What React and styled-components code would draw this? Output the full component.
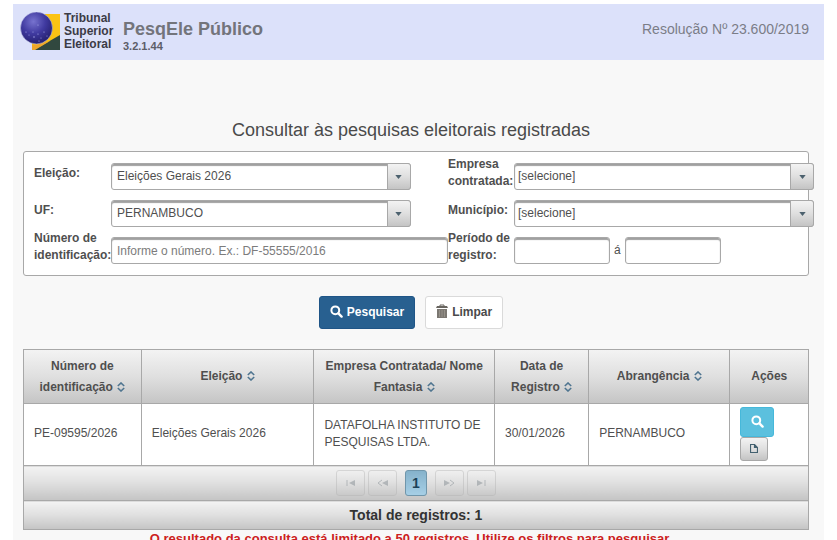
import React from 'react';
import styled, { createGlobalStyle, css } from 'styled-components';

const GlobalStyle = createGlobalStyle`
  * {
    box-sizing: border-box;
  }

  body {
    margin: 0;
    background: #ffffff;
    color: #4f4f4f;
    font-family: 'Liberation Sans', Arial, sans-serif;
    font-size: 12px;
    line-height: 17px;
  }

  button,
  input,
  select {
    font: inherit;
    color: inherit;
  }
`;

const metal = css`
  background: linear-gradient(to bottom, #f3f3f3 0%, #dfdfdf 50%, #c4c4c4 100%);
`;

const Page = styled.div`
  margin: 4px 13px 0;
  background: #f8f8f8;
`;

const Header = styled.header`
  display: flex;
  align-items: center;
  height: 56px;
  padding: 0 15px 0 7px;
  background: #dce1fa;
`;

const Logo = styled.div`
  display: flex;
  align-items: center;
  gap: 4px;
  padding-bottom: 2px;
  color: #3b3b46;
  font-weight: bold;
  line-height: 13px;
`;

const LogoText = styled.span`
  width: 49px;
`;

const Brand = styled.div`
  flex: 1;
  margin-left: 10px;
  padding-top: 9px;
  color: #73747b;
  font-weight: bold;
`;

const BrandName = styled.h1`
  margin: 0;
  font-size: 18px;
  line-height: 20px;
`;

const Version = styled.small`
  display: block;
  color: #5c5d68;
  font-size: 11px;
  line-height: 15px;
`;

const Resolution = styled.span`
  padding-bottom: 6px;
  color: #7b7d87;
  font-size: 14px;
`;

const Main = styled.main`
  padding: 58px 15px 20px 10px;
`;

const Title = styled.h2`
  margin: 0 0 9px;
  padding-right: 10px;
  color: #4a4a4a;
  font-size: 18px;
  font-weight: normal;
  line-height: 24px;
  text-align: center;
`;

const Panel = styled.form`
  margin: 0;
`;

const Fields = styled.div`
  display: grid;
  grid-template-columns: 77px 337fr 66px 294fr;
  grid-auto-rows: 34px;
  row-gap: 3px;
  padding: 4px 0 11px 10px;
  border: 1px solid #a8a8a8;
  border-radius: 3px;
  background: #ffffff;

  > :nth-child(4n) {
    margin-right: -6px;
  }
`;

const Label = styled.label`
  align-self: center;
  font-weight: bold;
`;

const Field = styled.div`
  display: flex;
  align-items: center;
  align-self: end;
  gap: 4px;
`;

const control = css`
  height: 27px;
  padding: 0 5px;
  border: 1px solid #a8a8a8;
  border-radius: 3px;
  background: #ffffff;
  box-shadow: inset 0 2px 1px #a0a0a0;
  outline: none;
`;

const TextInput = styled.input`
  ${control}
  width: ${({ $short }) => ($short ? '96px' : '100%')};

  &::placeholder {
    color: #7c7c7c;
    opacity: 1;
  }
`;

const SelectBox = styled.div`
  position: relative;
  width: ${({ $wide }) => ($wide ? '100%' : '89%')};
`;

const Select = styled.select`
  ${control}
  display: block;
  width: 100%;
  padding-left: ${({ $tight }) => ($tight ? '3px' : '5px')};
  appearance: none;
`;

const SelectTrigger = styled.span`
  ${metal}
  position: absolute;
  top: 0;
  right: 0;
  bottom: 0;
  display: flex;
  align-items: center;
  justify-content: center;
  width: 24px;
  border: 1px solid #a8a8a8;
  border-radius: 0 3px 3px 0;
  pointer-events: none;
`;

const Actions = styled.div`
  display: flex;
  justify-content: center;
  gap: 10px;
  margin: 20px 0;
  padding-right: 10px;
`;

const Button = styled.button`
  display: flex;
  align-items: center;
  gap: 4px;
  height: 33px;
  padding: 0 10px;
  border: 1px solid ${({ $primary }) => ($primary ? '#1f5587' : '#dadada')};
  border-radius: 3px;
  background: ${({ $primary }) => ($primary ? '#286090' : '#ffffff')};
  color: ${({ $primary }) => ($primary ? '#ffffff' : '#4a4a4a')};
  font-weight: bold;

  svg {
    margin-bottom: 3px;
  }
`;

const Table = styled.table`
  width: 100%;
  border-collapse: collapse;
  table-layout: fixed;
`;

const HeadCell = styled.th`
  width: ${({ $width }) => $width};
  height: 54px;
  padding: 0 4px;
  border: 1px solid #a8a8a8;
  line-height: 21px;
  text-align: center;

  svg {
    margin-left: 1px;
    vertical-align: -1px;
  }
`;

const Head = styled.thead`
  tr {
    ${metal}
  }
`;

const Cell = styled.td`
  height: 62px;
  padding: 2px 4px 4px 10px;
  border: 1px solid #a8a8a8;
  background: #ffffff;
`;

const RowActions = styled.div`
  display: flex;
  flex-direction: column;
  align-items: flex-start;
`;

const ViewButton = styled.button`
  display: flex;
  align-items: center;
  justify-content: center;
  width: 34px;
  height: 30px;
  padding: 0;
  border: 1px solid #46b8da;
  border-radius: 3px;
  background: #5bc0de;
  color: #ffffff;
`;

const FileButton = styled.button`
  ${metal}
  display: flex;
  align-items: center;
  justify-content: center;
  width: 28px;
  height: 24px;
  padding: 0;
  border: 1px solid #a8a8a8;
  border-radius: 3px;
`;

const FootCell = styled.td`
  ${metal}
  height: ${({ $total }) => ($total ? '29px' : '35px')};
  padding: 0;
  border: 1px solid #a8a8a8;
  color: #333333;
  font-size: 14px;
  font-weight: bold;
  text-align: center;
`;

const Pager = styled.nav`
  display: flex;
  justify-content: center;
  gap: 3px;
`;

const PageButton = styled.button`
  ${metal}
  display: flex;
  align-items: center;
  justify-content: center;
  width: 29px;
  height: 26px;
  padding: 0;
  border: 1px solid #a8a8a8;
  border-radius: 3px;
  opacity: 0.35;

  &[aria-current] {
    width: 22px;
    margin: 0 5px;
    border-color: #7096ab;
    background: linear-gradient(to bottom, #85b2cb, #a6cfe6);
    color: #1c4257;
    font-size: 14px;
    font-weight: bold;
    opacity: 1;
  }
`;

const Notice = styled.p`
  margin: 0;
  padding-right: 10px;
  color: #cc2020;
  font-size: 13px;
  font-weight: bold;
  text-align: center;
`;

const TseMark = () => (
  <svg width="40" height="38" viewBox="0 0 40 38" aria-hidden="true">
    <defs>
      <radialGradient id="globe" cx="0.4" cy="0.3" r="0.75">
        <stop offset="0" stopColor="#7773cf" />
        <stop offset="0.5" stopColor="#403aa0" />
        <stop offset="1" stopColor="#211c68" />
      </radialGradient>
    </defs>
    <path d="M12 2h28v36H12z" fill="#fbc313" />
    <path d="M14 38 40 23v15z" fill="#31483f" />
    <path d="M12 33 30 29 15 38h-3z" fill="#eea72b" />
    <circle cx="16.5" cy="16" r="16" fill="url(#globe)" stroke="#c9cdec" strokeWidth="0.5" />
    <g fill="#aeb2ee">
      <circle cx="18" cy="13" r="0.6" />
      <circle cx="6" cy="20" r="0.6" />
      <circle cx="9" cy="23" r="0.5" />
      <circle cx="13" cy="20" r="0.5" />
      <circle cx="14" cy="25" r="0.7" />
      <circle cx="18" cy="22" r="0.6" />
      <circle cx="21" cy="26" r="0.5" />
      <circle cx="24" cy="20" r="0.6" />
      <circle cx="27" cy="24" r="0.5" />
      <circle cx="19" cy="29" r="0.6" />
    </g>
  </svg>
);

const SearchIcon = () => (
  <svg width="13" height="13" viewBox="0 0 13 13" fill="none" stroke="currentColor" aria-hidden="true">
    <circle cx="5.3" cy="5.3" r="3.9" strokeWidth="2" />
    <path d="m8.4 8.4 3.2 3.2" strokeWidth="2.4" strokeLinecap="round" />
  </svg>
);

const TrashIcon = () => (
  <svg width="12" height="14" viewBox="0 0 12 14" aria-hidden="true">
    <path d="M4 2V1h4v1" fill="none" stroke="#68655f" />
    <path d="M1 2h10l1 2H0z" fill="#68655f" />
    <path d="M1 5h10v9H1z" fill="#7b7771" />
    <path d="M3.5 6v7M6 6v7M8.5 6v7" stroke="#969189" />
  </svg>
);

const ArrowIcon = () => (
  <svg width="7" height="4" viewBox="0 0 8 5" aria-hidden="true">
    <path d="M0 0h8L4 5z" fill="#4c616e" />
  </svg>
);

const SortIcon = () => (
  <svg width="8" height="10" viewBox="0 0 8 10" fill="none" stroke="#4f7590" strokeWidth="1.6" aria-hidden="true">
    <path d="M.8 4 4 1l3.2 3M.8 6 4 9l3.2-3" />
  </svg>
);

const FileIcon = () => (
  <svg width="8" height="9" viewBox="0 0 8 9" fill="none" stroke="#42606f" strokeWidth="1.2" aria-hidden="true">
    <path d="M.5.5h4l3 3v5h-7zM4.5.5v3h3" />
  </svg>
);

const pagerShapes = {
  first: ['M2 1v6', 'M10 1v6L4 4z'],
  prev: ['M5 1 1 4l4 3', 'M11 1v6L5 4z'],
  next: ['M6 1l4 3-4 3', 'M0 1v6l6-3z'],
  last: ['M9 1v6', 'M1 1v6l6-3z'],
};

const PagerIcon = ({ name }) => (
  <svg width="11" height="8" viewBox="0 0 11 8" fill="none" aria-hidden="true">
    <path d={pagerShapes[name][0]} stroke="#5f6b73" />
    <path d={pagerShapes[name][1]} fill="#5f6b73" />
  </svg>
);

const SelectField = ({ id, label, value, wide }) => (
  <>
    <Label htmlFor={id}>{label}</Label>
    <Field>
      <SelectBox $wide={wide}>
        <Select id={id} $tight={wide}>
          <option>{value}</option>
        </Select>
        <SelectTrigger>
          <ArrowIcon />
        </SelectTrigger>
      </SelectBox>
    </Field>
  </>
);

const PagerButton = ({ name, label }) => (
  <PageButton type="button" aria-label={label} disabled>
    <PagerIcon name={name} />
  </PageButton>
);

const columns = [
  { label: 'Número de identificação', width: '15%', sortable: true },
  { label: 'Eleição', width: '22%', sortable: true },
  { label: 'Empresa Contratada/ Nome Fantasia', width: '23%', sortable: true },
  { label: 'Data de Registro', width: '12%', sortable: true },
  { label: 'Abrangência', width: '18%', sortable: true },
  { label: 'Ações', width: '10%' },
];

const rows = [
  ['PE-09595/2026', 'Eleições Gerais 2026', 'DATAFOLHA INSTITUTO DE PESQUISAS LTDA.', '30/01/2026', 'PERNAMBUCO'],
];

const App = () => (
  <>
    <GlobalStyle />
    <Page>
      <Header>
        <Logo>
          <TseMark />
          <LogoText>Tribunal Superior Eleitoral</LogoText>
        </Logo>
        <Brand>
          <BrandName>PesqEle Público</BrandName>
          <Version>3.2.1.44</Version>
        </Brand>
        <Resolution>Resolução Nº 23.600/2019</Resolution>
      </Header>
      <Main>
        <Title>Consultar às pesquisas eleitorais registradas</Title>
        <Panel>
          <Fields>
            <SelectField id="eleicao" label="Eleição:" value="Eleições Gerais 2026" />
            <SelectField id="empresa" label="Empresa contratada:" value="[selecione]" wide />
            <SelectField id="uf" label="UF:" value="PERNAMBUCO" />
            <SelectField id="municipio" label="Município:" value="[selecione]" wide />
            <Label htmlFor="numero">Número de identificação:</Label>
            <Field>
              <TextInput id="numero" type="text" placeholder="Informe o número. Ex.: DF-55555/2016" />
            </Field>
            <Label htmlFor="inicio">Período de registro:</Label>
            <Field>
              <TextInput id="inicio" type="text" $short />
              <label htmlFor="fim">á</label>
              <TextInput id="fim" type="text" $short />
            </Field>
          </Fields>
          <Actions>
            <Button type="button" $primary>
              <SearchIcon />
              Pesquisar
            </Button>
            <Button type="reset">
              <TrashIcon />
              Limpar
            </Button>
          </Actions>
        </Panel>
        <Table>
          <Head>
            <tr>
              {columns.map(({ label, width, sortable }) => (
                <HeadCell key={label} $width={width} scope="col">
                  {label} {sortable && <SortIcon />}
                </HeadCell>
              ))}
            </tr>
          </Head>
          <tbody>
            {rows.map((row) => (
              <tr key={row[0]}>
                {row.map((value) => (
                  <Cell key={value}>{value}</Cell>
                ))}
                <Cell>
                  <RowActions>
                    <ViewButton type="button" aria-label="Visualizar">
                      <SearchIcon />
                    </ViewButton>
                    <FileButton type="button" aria-label="Arquivo">
                      <FileIcon />
                    </FileButton>
                  </RowActions>
                </Cell>
              </tr>
            ))}
          </tbody>
          <tfoot>
            <tr>
              <FootCell colSpan={columns.length}>
                <Pager>
                  <PagerButton name="first" label="Primeira" />
                  <PagerButton name="prev" label="Anterior" />
                  <PageButton type="button" aria-current="page">
                    1
                  </PageButton>
                  <PagerButton name="next" label="Próxima" />
                  <PagerButton name="last" label="Última" />
                </Pager>
              </FootCell>
            </tr>
            <tr>
              <FootCell colSpan={columns.length} $total>
                Total de registros: {rows.length}
              </FootCell>
            </tr>
          </tfoot>
        </Table>
        <Notice>O resultado da consulta está limitado a 50 registros. Utilize os filtros para pesquisar.</Notice>
      </Main>
    </Page>
  </>
);

export default App;
